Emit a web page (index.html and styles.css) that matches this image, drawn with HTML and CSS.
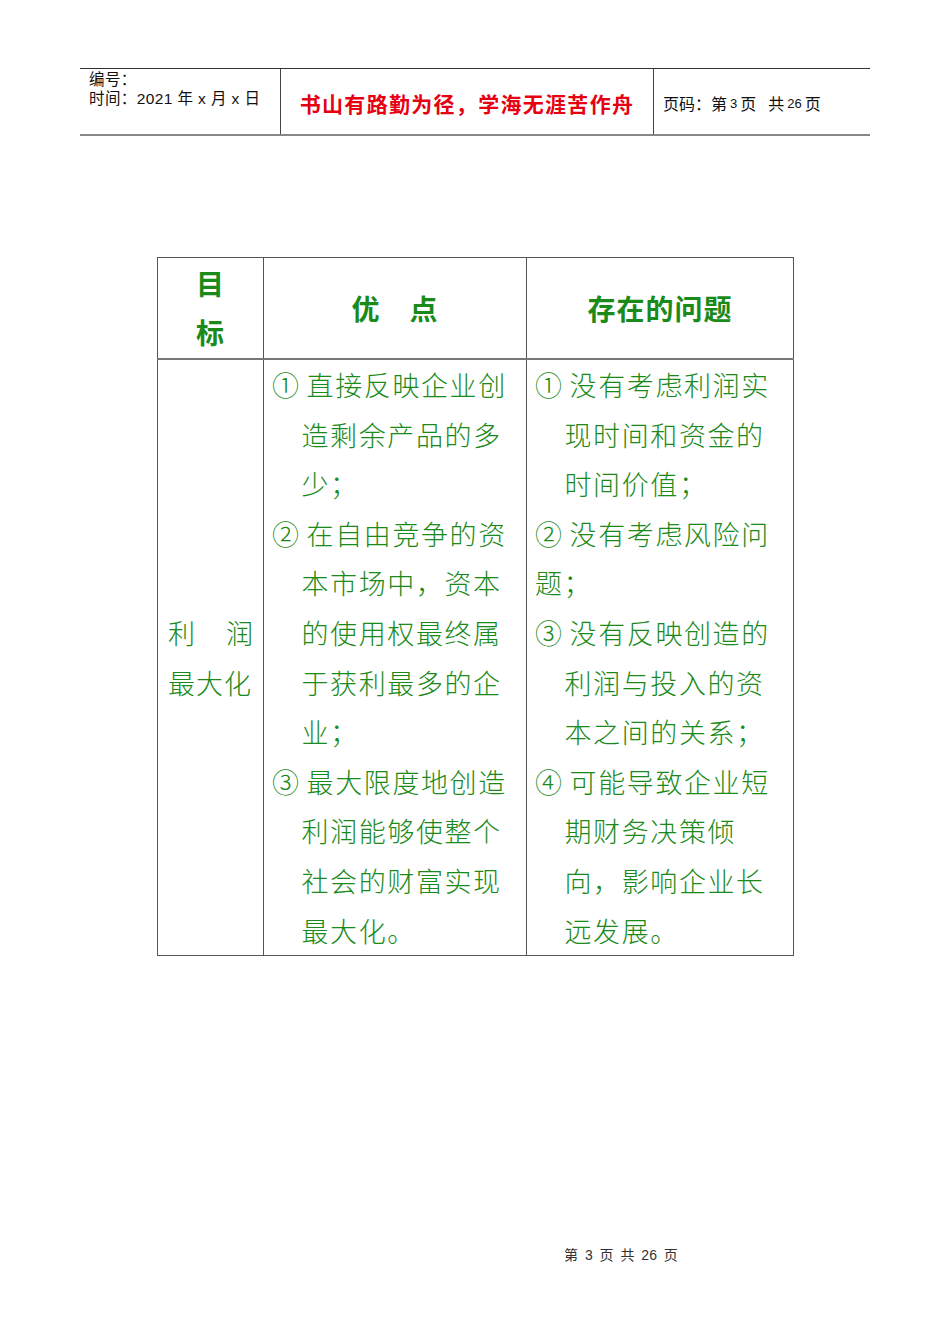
FILE: index.html
```html
<!DOCTYPE html>
<html lang="zh-CN">
<head>
<meta charset="utf-8">
<title>第3页</title>
<link rel="stylesheet" href="styles.css">
</head>
<body>
<div class="page">
  <div class="doc-header">
    <div class="hd-left">
      <div>编号：</div>
      <div>时间：2021 年 x 月 x 日</div>
    </div>
    <div class="hd-mid">书山有路勤为径，学海无涯苦作舟</div>
    <div class="hd-right">页码：第<span class="num">3</span>页<span class="gap"></span>共<span class="num">26</span>页</div>
  </div>

  <table class="grid">
    <thead>
      <tr>
        <th class="c1">目<br>标</th>
        <th class="c2">优&emsp;点</th>
        <th class="c3">存在的问题</th>
      </tr>
    </thead>
    <tbody>
      <tr>
        <td class="c1 goal"><span class="just">利　润</span><br>最大化</td>
        <td class="c2">
          <p class="item"><span class="mark">①</span>直接反映企业创<br>造剩余产品的多<br>少；</p>
          <p class="item"><span class="mark">②</span>在自由竞争的资<br>本市场中，资本<br>的使用权最终属<br>于获利最多的企<br>业；</p>
          <p class="item"><span class="mark">③</span>最大限度地创造<br>利润能够使整个<br>社会的财富实现<br>最大化。</p>
        </td>
        <td class="c3">
          <p class="item"><span class="mark">①</span>没有考虑利润实<br>现时间和资金的<br>时间价值；</p>
          <p class="plain"><span class="mark">②</span>没有考虑风险问<br>题；</p>
          <p class="item"><span class="mark">③</span>没有反映创造的<br>利润与投入的资<br>本之间的关系；</p>
          <p class="item"><span class="mark">④</span>可能导致企业短<br>期财务决策倾<br>向，影响企业长<br>远发展。</p>
        </td>
      </tr>
    </tbody>
  </table>

  <div class="footer">第 3 页 共 26 页</div>
</div>
</body>
</html>
```

FILE: styles.css
```css
html, body {
  margin: 0;
  padding: 0;
  background: #ffffff;
}

body {
  font-family: "Noto Sans CJK SC", "Liberation Sans", sans-serif;
  color: #111;
}

.page {
  width: 950px;
  height: 1344px;
  padding-top: 68px;
  box-sizing: border-box;
}

.doc-header {
  margin-left: 80px;
  width: 790px;
  height: 68px;
  display: grid;
  grid-template-columns: 201px 373px 216px;
  border-top: 1px solid #333;
  border-bottom: 2px solid #888;
  box-sizing: border-box;
}

.hd-left {
  border-right: 1px solid #444;
  padding: 1px 0 0 9px;
  font-family: "Liberation Sans", "Noto Sans CJK SC", sans-serif;
  font-size: 15.5px;
  line-height: 19px;
  letter-spacing: 0.4px;
  color: #111;
}

.hd-mid {
  border-right: 1px solid #444;
  display: flex;
  align-items: center;
  justify-content: center;
  padding-top: 3px;
  color: #e60012;
  font-weight: 700;
  font-size: 21px;
  letter-spacing: 1.3px;
}

.hd-right {
  display: flex;
  align-items: center;
  padding-left: 9px;
  padding-top: 3px;
  font-size: 16px;
  color: #111;
  white-space: nowrap;
}

.hd-right .num {
  font-family: "Liberation Sans", sans-serif;
  font-size: 13px;
  margin: 0 3px;
}

.hd-right .gap {
  display: inline-block;
  width: 12px;
}

.grid {
  margin-top: 121px;
  margin-left: 157px;
  border-collapse: collapse;
  table-layout: fixed;
  width: 633px;
  color: #1a8a1a;
}

.grid th,
.grid td {
  border: 1px solid #555;
  padding: 0;
}

.grid .c1 { width: 105px; }
.grid .c2 { width: 262px; }
.grid .c3 { width: 266px; }

.grid th {
  height: 100px;
  border-bottom: 2px solid #777;
  font-weight: 700;
  font-size: 28px;
  line-height: 49px;
  text-align: center;
  vertical-align: middle;
  letter-spacing: 1px;
  color: #1a8a1a;
}

.grid td {
  vertical-align: top;
  font-size: 27px;
  font-weight: 300;
  line-height: 49.6px;
  white-space: nowrap;
}

.grid td.goal {
  vertical-align: middle;
  padding-left: 10px;
  letter-spacing: 1px;
}

.goal .just {
  display: inline-block;
  width: 86px;
  text-align-last: justify;
  text-align: justify;
}

.grid td.c2 { padding-left: 8px; }
.grid td.c3 { padding-left: 8px; }

.item,
.plain {
  margin: 0;
  letter-spacing: 1.6px;
}

.item {
  padding-left: 29.5px;
  text-indent: -29.5px;
}

.mark {
  margin-right: 6px;
}

.footer {
  margin-top: 290px;
  margin-left: 564px;
  font-family: "Liberation Sans", "Noto Sans CJK SC", sans-serif;
  font-size: 14px;
  line-height: 18px;
  color: #333;
  word-spacing: 3px;
}
```
